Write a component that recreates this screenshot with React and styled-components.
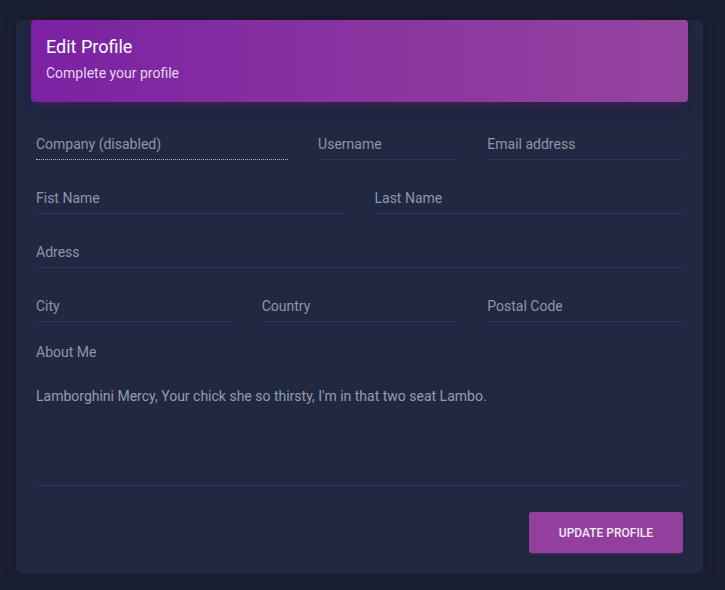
import React from "react";
import styled, { createGlobalStyle } from "styled-components";

const Global = createGlobalStyle`
  html, body { margin: 0; padding: 0; background: #1b1f33; }
  body { font-family: Roboto, "Liberation Sans", sans-serif; }
  * { box-sizing: border-box; }
`;

const Page = styled.div`
  min-height: 590px;
  padding: 40px 22px 17px 16px;
  background: #1b1f33;
`;

const Card = styled.div`
  background: #212842;
  border-radius: 6px;
  box-shadow: 0 1px 15px rgba(0, 0, 0, 0.15);
`;

const Header = styled.div`
  margin: -20px 15px 0;
  padding: 15px 15px 19px;
  border-radius: 4px;
  background: linear-gradient(90deg, #7b21a3 0%, #8b35a0 55%, #9544a0 100%);
  box-shadow: 0 4px 20px 0 rgba(0, 0, 0, 0.14), 0 7px 10px -5px rgba(156, 39, 176, 0.35);
`;

const Title = styled.h4`
  margin: 0 0 4px;
  font-size: 18px;
  line-height: 24px;
  font-weight: 400;
  color: #ffffff;
`;

const Subtitle = styled.p`
  margin: 0;
  font-size: 14px;
  line-height: 20px;
  color: rgba(255, 255, 255, 0.82);
`;

const Body = styled.div`
  padding: 32px 20px 20px;
`;

const Grid = styled.div`
  display: grid;
  grid-template-columns: repeat(12, 1fr);
  column-gap: 30px;
  row-gap: 28px;
`;

const Field = styled.div`
  grid-column: span ${(p) => p.$span};
  padding-bottom: 5px;
  border-bottom: 1px ${(p) => (p.$disabled ? "dotted #b4b8c6" : "solid #2f3752")};
`;

const Label = styled.div`
  font-size: 14px;
  line-height: 20px;
  color: #8f96a8;
`;

const About = styled.div`
  margin-top: 20px;
`;

const TextArea = styled.div`
  margin-top: 24px;
  height: 100px;
  border-bottom: 1px solid #2f3752;
  font-size: 14px;
  line-height: 20px;
  color: #959cad;
`;

const Footer = styled.div`
  display: flex;
  justify-content: flex-end;
  margin-top: 26px;
`;

const Button = styled.button`
  width: 154px;
  height: 41px;
  border: none;
  border-radius: 3px;
  background: #923f9e;
  color: #f3eaf5;
  font-family: Roboto, "Liberation Sans", sans-serif;
  font-size: 12px;
  font-weight: 500;
  text-transform: uppercase;
  box-shadow: 0 2px 2px 0 rgba(146, 63, 158, 0.14), 0 3px 1px -2px rgba(146, 63, 158, 0.2),
    0 1px 5px 0 rgba(0, 0, 0, 0.12);
  cursor: pointer;
`;

const rows = [
  [
    { label: "Company (disabled)", span: 5, disabled: true },
    { label: "Username", span: 3 },
    { label: "Email address", span: 4 },
  ],
  [
    { label: "Fist Name", span: 6 },
    { label: "Last Name", span: 6 },
  ],
  [{ label: "Adress", span: 12 }],
  [
    { label: "City", span: 4 },
    { label: "Country", span: 4 },
    { label: "Postal Code", span: 4 },
  ],
];

export default function App() {
  return (
    <>
      <Global />
      <Page>
        <Card>
          <Header>
            <Title>Edit Profile</Title>
            <Subtitle>Complete your profile</Subtitle>
          </Header>
          <Body>
            <Grid>
              {rows.flat().map((f) => (
                <Field key={f.label} $span={f.span} $disabled={f.disabled}>
                  <Label>{f.label}</Label>
                </Field>
              ))}
            </Grid>
            <About>
              <Label>About Me</Label>
              <TextArea>
                Lamborghini Mercy, Your chick she so thirsty, I'm in that two seat Lambo.
              </TextArea>
            </About>
            <Footer>
              <Button>Update Profile</Button>
            </Footer>
          </Body>
        </Card>
      </Page>
    </>
  );
}
